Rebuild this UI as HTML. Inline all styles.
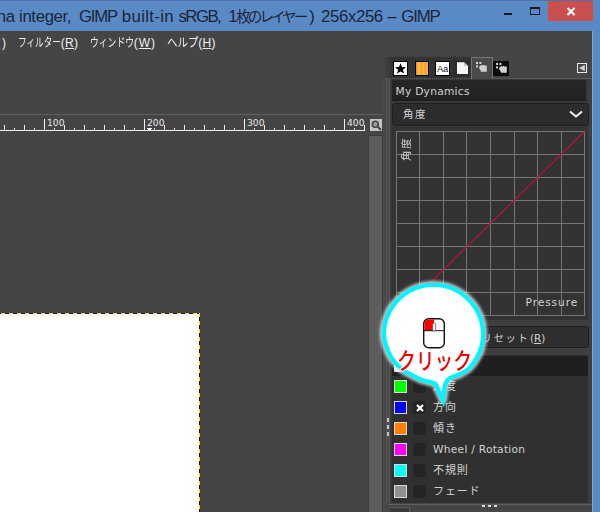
<!DOCTYPE html>
<html lang="ja">
<head>
<meta charset="utf-8">
<title>GIMP</title>
<style>
html,body{margin:0;padding:0;}
body{width:600px;height:512px;overflow:hidden;position:relative;background:#454545;font-family:"DejaVu Sans","Noto Sans CJK JP",sans-serif;color:#e0e0e0;}
.abs{position:absolute;}
#titlebar{left:0;top:0;width:600px;height:31px;background:#5a8ac6;}
#titletop{left:0;top:0;width:600px;height:1px;background:#4c72a8;}
.ttl{top:5px;height:24px;line-height:24px;font-family:"Liberation Sans","Noto Sans CJK JP",sans-serif;font-size:17px;color:#1a2538;white-space:nowrap;}
#rborder{left:593px;top:0;width:7px;height:512px;background:#5a8ac6;}
#rborder2{left:592px;top:31px;width:1px;height:481px;background:#7ba3d6;}
#closebtn{left:548px;top:1px;width:45px;height:20px;background:#c9504f;}
.menu{top:35px;height:16px;line-height:16px;font-size:12px;color:#f0f0f0;white-space:nowrap;font-family:"Liberation Sans","Noto Sans CJK JP",sans-serif;}
.rl{font-size:9.2px;line-height:10px;top:118px;color:#e8e8e8;font-family:"DejaVu Sans",sans-serif;}
#canvas{left:0;top:314px;width:199px;height:198px;background:#fff;}
.lbl{font-size:11.5px;line-height:14px;color:#d2d2d2;white-space:nowrap;}
.sw{left:394px;width:11px;height:11px;border:1px solid #d8d8d8;}
.cb{left:413px;width:13px;height:13px;border-radius:3px;background:#242424;}
</style>
</head>
<body>
<div id="titlebar" class="abs"></div>
<div id="titletop" class="abs"></div>
<div id="rborder" class="abs"></div>
<div id="rborder2" class="abs"></div>
<div class="abs ttl" style="left:-3.2px;font-size:16.8px;letter-spacing:-0.367px;">na integer,</div>
<div class="abs ttl" style="left:79.0px;font-size:16.8px;letter-spacing:-1.230px;">GIMP</div>
<div class="abs ttl" style="left:121.8px;font-size:16.8px;letter-spacing:0.352px;">built-in</div>
<div class="abs ttl" style="left:178.5px;font-size:16.8px;letter-spacing:-1.555px;">sRGB,</div>
<div class="abs ttl" style="left:228.3px;font-size:16.8px;letter-spacing:0.000px;">1</div>
<div class="abs ttl" style="left:236.3px;font-size:14.5px;letter-spacing:-2.936px;">枚のレイヤー</div>
<div class="abs ttl" style="left:309.3px;font-size:16.8px;letter-spacing:0.000px;">)</div>
<div class="abs ttl" style="left:321.0px;font-size:16.8px;letter-spacing:-0.365px;">256x256</div>
<div class="abs ttl" style="left:387.3px;font-size:16.8px;letter-spacing:0.000px;">–</div>
<div class="abs ttl" style="left:401.3px;font-size:16.8px;letter-spacing:-1.164px;">GIMP</div>
<div class="abs" style="left:504px;top:13px;width:8px;height:2px;background:#1a1a1a;"></div>
<div class="abs" style="left:530px;top:7px;width:8px;height:5px;border:1px solid #1a1a1a;border-top-width:2px;"></div>
<div id="closebtn" class="abs"></div>
<svg class="abs" style="left:565px;top:6px;" width="12" height="11" viewBox="0 0 12 11"><path d="M2.5 2 L9.5 9 M9.5 2 L2.5 9" stroke="#fff" stroke-width="2" fill="none"/></svg>
<div class="abs menu" style="left:2px;">)</div>
<div class="abs menu" style="left:17.5px;transform:scaleX(0.719);transform-origin:0 0;">フィルター</div>
<div class="abs menu" style="left:60.8px;font-family:'Liberation Sans',sans-serif;letter-spacing:0.26px;">(<u>R</u>)</div>
<div class="abs menu" style="left:89.5px;transform:scaleX(0.733);transform-origin:0 0;">ウィンドウ</div>
<div class="abs menu" style="left:133.8px;font-family:'Liberation Sans',sans-serif;letter-spacing:0.94px;">(<u>W</u>)</div>
<div class="abs menu" style="left:166.5px;transform:scaleX(0.875);transform-origin:0 0;">ヘルプ</div>
<div class="abs menu" style="left:198.3px;font-family:'Liberation Sans',sans-serif;letter-spacing:0.26px;">(<u>H</u>)</div>
<div class="abs" style="left:0;top:114px;width:386px;height:1px;background:#5e5e5e;"></div>
<div class="abs" style="left:0;top:130px;width:365px;height:1px;background:#f2f2f2;"></div>
<svg class="abs" style="left:0;top:116px;" width="370" height="16" viewBox="0 0 370 16" shape-rendering="crispEdges"><g fill="#f2f2f2"><rect x="4" y="9" width="1" height="6"/><rect x="14" y="12" width="1" height="3"/><rect x="24" y="9" width="1" height="6"/><rect x="34" y="12" width="1" height="3"/><rect x="44" y="3" width="1" height="12"/><rect x="54" y="12" width="1" height="3"/><rect x="64" y="9" width="1" height="6"/><rect x="74" y="12" width="1" height="3"/><rect x="84" y="9" width="1" height="6"/><rect x="94" y="12" width="1" height="3"/><rect x="104" y="9" width="1" height="6"/><rect x="114" y="12" width="1" height="3"/><rect x="124" y="9" width="1" height="6"/><rect x="134" y="12" width="1" height="3"/><rect x="144" y="3" width="1" height="12"/><rect x="154" y="12" width="1" height="3"/><rect x="164" y="9" width="1" height="6"/><rect x="174" y="12" width="1" height="3"/><rect x="184" y="9" width="1" height="6"/><rect x="194" y="12" width="1" height="3"/><rect x="204" y="9" width="1" height="6"/><rect x="214" y="12" width="1" height="3"/><rect x="224" y="9" width="1" height="6"/><rect x="234" y="12" width="1" height="3"/><rect x="244" y="3" width="1" height="12"/><rect x="254" y="12" width="1" height="3"/><rect x="264" y="9" width="1" height="6"/><rect x="274" y="12" width="1" height="3"/><rect x="284" y="9" width="1" height="6"/><rect x="294" y="12" width="1" height="3"/><rect x="304" y="9" width="1" height="6"/><rect x="314" y="12" width="1" height="3"/><rect x="324" y="9" width="1" height="6"/><rect x="334" y="12" width="1" height="3"/><rect x="344" y="3" width="1" height="12"/><rect x="354" y="12" width="1" height="3"/><rect x="364" y="9" width="1" height="6"/><path d="M146 11.5 L153 11.5 L149.5 15 Z"/></g></svg>
<div class="abs rl" style="left:47px;">100</div>
<div class="abs rl" style="left:147px;">200</div>
<div class="abs rl" style="left:247px;">300</div>
<div class="abs rl" style="left:347px;">400</div>
<div id="canvas" class="abs"></div>
<div class="abs" style="left:0;top:313px;width:200px;height:1px;background:repeating-linear-gradient(90deg,#111 0,#111 1px,#ffe600 1px,#ffe600 5px,#111 5px,#111 8px);"></div>
<div class="abs" style="left:199px;top:313px;width:1px;height:199px;background:repeating-linear-gradient(180deg,#ffe600 0,#ffe600 4px,#111 4px,#111 8px);"></div>
<div class="abs" style="left:370px;top:119px;width:12px;height:12px;background:#c4c4c4;"></div>
<svg class="abs" style="left:370px;top:119px;" width="12" height="12" viewBox="0 0 12 12"><circle cx="5.3" cy="5.3" r="3" fill="#9a9a9a" stroke="#444" stroke-width="1.6"/><path d="M7.6 7.6 L11 11" stroke="#444" stroke-width="2"/></svg>
<div class="abs" style="left:368px;top:135px;width:13px;height:377px;background:#5d5d5d;border:1px solid #3a3a3a;border-bottom:none;"></div>
<div class="abs" style="left:383px;top:79px;width:9px;height:433px;background:#494949;"></div>
<div class="abs" style="left:386px;top:79px;width:1px;height:433px;background:#575757;"></div>
<div class="abs" style="left:389px;top:79px;width:1px;height:433px;background:#5c5c5c;"></div>
<div class="abs" style="left:390px;top:79px;width:2px;height:433px;background:#393939;"></div>
<div class="abs" style="left:385px;top:56px;width:86px;height:23px;background:linear-gradient(90deg,#404040,#333 8px);border-top:1px dotted #4e4e4e;border-bottom:1px dotted #626262;box-sizing:border-box;"></div>
<div class="abs" style="left:492px;top:78px;width:100px;height:1px;background:#5a5a5a;"></div>
<div class="abs" style="left:393px;top:61px;width:13px;height:13px;background:#fff;border:1px solid #000;"></div>
<svg class="abs" style="left:394px;top:62px;" width="13" height="13" viewBox="0 0 13 13"><path d="M6.5 1.2 L8 5 L12 5.2 L8.9 7.7 L10 11.6 L6.5 9.4 L3 11.6 L4.1 7.7 L1 5.2 L5 5 Z" fill="#000"/></svg>
<div class="abs" style="left:415px;top:61px;width:12px;height:13px;border:1px solid #000;background:linear-gradient(90deg,#f08a1c 0%,#ffc24a 25%,#f59a28 45%,#ffc24a 60%,#f59a28 75%,#ffb640 100%);"></div>
<div class="abs" style="left:435px;top:61px;width:13px;height:13px;background:#fff;border:1px solid #000;font-family:'Liberation Sans',sans-serif;font-size:9.5px;line-height:14px;color:#222;text-align:center;letter-spacing:-0.4px;">Aa</div>
<div class="abs" style="left:453px;top:60px;width:17px;height:16px;background:#2c2c2c;"></div>
<svg class="abs" style="left:456px;top:61px;" width="13" height="14" viewBox="0 0 13 14"><path d="M1 1.2 L8 1.2 L12 5 L12 13 L1 13 Z" fill="#f4f4f4"/><path d="M8 1.2 L8 5 L12 5 Z" fill="#c8c8c8"/></svg>
<div class="abs" style="left:471px;top:57px;width:20px;height:22px;background:#4a4a4a;border:1px solid #747474;border-bottom:none;box-sizing:content-box;"></div>
<svg class="abs" style="left:476px;top:62px;" width="12" height="11" viewBox="0 0 12 11"><g fill="#d0d0d0"><rect x="0" y="0" width="2" height="2"/><rect x="3.4" y="0" width="2" height="2"/><rect x="0" y="3.4" width="2" height="2"/><path d="M3.4 4.4 L5 3 L6.5 3.4 L7.5 2.8 L8.6 3.6 L10.8 3.4 L10.8 9.8 L5 9.8 L4.4 8 L3.2 6.4 Z"/></g></svg>
<div class="abs" style="left:493px;top:61px;width:16px;height:15px;background:#0c0c0c;"></div>
<svg class="abs" style="left:496px;top:62.5px;" width="12" height="11" viewBox="0 0 12 11"><g fill="#d0d0d0"><rect x="0" y="0" width="2" height="2"/><rect x="3.4" y="0" width="2" height="2"/><rect x="0" y="3.4" width="2" height="2"/><path d="M3.4 4.4 L5 3 L6.5 3.4 L7.5 2.8 L8.6 3.6 L10.8 3.4 L10.8 9.8 L5 9.8 L4.4 8 L3.2 6.4 Z"/></g></svg>
<div class="abs" style="left:577px;top:63px;width:8px;height:8px;border:1px solid #e8e8e8;"></div>
<svg class="abs" style="left:578px;top:64px;" width="8" height="8" viewBox="0 0 8 8"><path d="M6.8 0.8 L6.8 7.2 L1 4 Z" fill="#d0d0d0"/></svg>
<div class="abs" style="left:392px;top:79px;width:200px;height:424px;background:#3e3e3e;"></div>
<div class="abs" style="left:392px;top:79px;width:196px;height:50px;background:#383838;"></div>
<div class="abs" style="left:392px;top:79.5px;width:194px;height:21px;background:linear-gradient(#272727,#212121);border-bottom:1px solid #1a1a1a;box-sizing:border-box;"></div>
<div class="abs lbl" style="left:395.5px;top:84.5px;font-size:10.67px;letter-spacing:0.25px;">My Dynamics</div>
<div class="abs" style="left:392px;top:103px;width:197px;height:23px;background:#2c2c2c;border:1px solid #202020;border-radius:3px;box-sizing:border-box;"></div>
<div class="abs lbl" style="left:403px;top:107px;letter-spacing:1.5px;font-size:10.5px;">角度</div>
<svg class="abs" style="left:568px;top:109px;" width="16" height="10" viewBox="0 0 16 10"><path d="M2 2.5 L8 7.5 L14 2.5" stroke="#f4f4f4" stroke-width="2" fill="none"/></svg>
<svg class="abs" style="left:392px;top:127px;" width="200" height="195" viewBox="392 127 200 195"><rect x="392" y="127" width="196" height="193" fill="#333"/><rect x="396" y="131" width="189" height="185" fill="#333"/><g fill="#767676" shape-rendering="crispEdges"><rect x="396" y="131" width="1" height="185"/><rect x="419" y="131" width="1" height="185"/><rect x="443" y="131" width="1" height="185"/><rect x="466" y="131" width="1" height="185"/><rect x="490" y="131" width="1" height="185"/><rect x="514" y="131" width="1" height="185"/><rect x="537" y="131" width="1" height="185"/><rect x="561" y="131" width="1" height="185"/><rect x="584" y="131" width="1" height="185"/><rect x="396" y="131" width="189" height="1"/><rect x="396" y="154" width="189" height="1"/><rect x="396" y="177" width="189" height="1"/><rect x="396" y="200" width="189" height="1"/><rect x="396" y="223" width="189" height="1"/><rect x="396" y="246" width="189" height="1"/><rect x="396" y="269" width="189" height="1"/><rect x="396" y="292" width="189" height="1"/><rect x="396" y="315" width="189" height="1"/></g><line x1="396.5" y1="315.5" x2="584.5" y2="131.5" stroke="#be1238" stroke-width="1.15"/></svg>
<div class="abs lbl" style="left:525.5px;top:295.5px;font-size:10.67px;letter-spacing:0.9px;">Pressure</div>
<div class="abs lbl" style="left:399px;top:161px;font-size:10.5px;transform:rotate(-90deg);transform-origin:0 0;letter-spacing:1.8px;opacity:0.999;">角度</div>
<div class="abs" style="left:438px;top:326px;width:151px;height:22px;background:#2e2e2e;border:1px solid #1e1e1e;border-radius:3px;box-sizing:border-box;"></div>
<div class="abs lbl" style="left:481.5px;top:331px;letter-spacing:1.6px;font-size:10.4px;">リセット<span style="letter-spacing:0;margin-left:0.5px">(<u>R</u>)</span></div>
<div class="abs" style="left:392px;top:355px;width:196px;height:148px;background:#303030;"></div>
<div class="abs" style="left:392px;top:355.5px;width:196px;height:20px;background:#1f1f1f;"></div>
<div class="abs sw" style="top:358.9px;background:#ffd8d8;"></div>
<div class="abs cb" style="top:358.9px;"></div>
<div class="abs lbl" style="left:433px;top:358.5px;font-size:11px;letter-spacing:0.9px;">筆圧</div>
<div class="abs sw" style="top:379.9px;background:#00ff00;"></div>
<div class="abs cb" style="top:379.9px;"></div>
<div class="abs lbl" style="left:433px;top:379.5px;font-size:11px;letter-spacing:0.9px;">速度</div>
<div class="abs sw" style="top:400.9px;background:#0000ff;"></div>
<div class="abs cb" style="top:400.9px;"></div>
<div class="abs lbl" style="left:433px;top:400.5px;font-size:11px;letter-spacing:0.9px;">方向</div>
<div class="abs sw" style="top:421.9px;background:#ff8000;"></div>
<div class="abs cb" style="top:421.9px;"></div>
<div class="abs lbl" style="left:433px;top:421.5px;font-size:11px;letter-spacing:0.9px;">傾き</div>
<div class="abs sw" style="top:442.9px;background:#ff00ff;"></div>
<div class="abs cb" style="top:442.9px;"></div>
<div class="abs lbl" style="left:433px;top:442.5px;font-size:10.67px;letter-spacing:0.25px;">Wheel / Rotation</div>
<div class="abs sw" style="top:463.9px;background:#00ffff;"></div>
<div class="abs cb" style="top:463.9px;"></div>
<div class="abs lbl" style="left:433px;top:463.5px;font-size:11px;letter-spacing:0.9px;">不規則</div>
<div class="abs sw" style="top:484.9px;background:#909090;"></div>
<div class="abs cb" style="top:484.9px;"></div>
<div class="abs lbl" style="left:433px;top:484.5px;font-size:11px;letter-spacing:0.9px;">フェード</div>
<svg class="abs" style="left:415px;top:402.6px;" width="10" height="10" viewBox="0 0 10 10"><path d="M2 2 L8 8 M8 2 L2 8" stroke="#fff" stroke-width="2.2" fill="none"/></svg>
<div class="abs" style="left:386px;top:503px;width:206px;height:9px;background:#464646;"></div>
<div class="abs" style="left:388px;top:504px;width:204px;height:1px;background:#606060;"></div>
<div class="abs" style="left:390px;top:507px;width:20px;height:5px;background:#3b3b3b;border-top:1px solid #5c5c5c;border-right:1px solid #606060;box-sizing:border-box;"></div>
<div class="abs" style="left:482px;top:505px;width:3px;height:2px;background:#ddd;box-shadow:6px 0 0 #ddd,12px 0 0 #ddd;"></div>
<div class="abs" style="left:386.5px;top:418px;width:2.5px;height:3.5px;background:#c4c4c4;box-shadow:0 7px 0 #c4c4c4,0 14px 0 #c4c4c4;"></div>
<svg class="abs" style="left:370px;top:270px;" width="130" height="145" viewBox="370 270 130 145"><defs><filter id="glow" x="-20%" y="-20%" width="140%" height="140%"><feGaussianBlur stdDeviation="1.6"/></filter></defs><path d="M383.90 334.50 A49.60 49.60 0 0 1 483.10 334.50 C483.10 338.40 482.60 342.38 481.60 346.20 C480.60 350.02 479.25 353.65 477.10 357.40 C474.95 361.15 471.60 365.92 468.70 368.70 C465.80 371.48 462.90 372.50 459.70 374.10 C456.50 375.70 451.90 376.65 449.50 378.30 C447.10 379.95 446.22 381.50 445.30 384.00 C444.38 386.50 444.38 390.60 444.00 393.30 C443.62 396.00 443.33 397.90 443.00 400.20 C441.57 397.23 440.10 394.10 438.70 391.30 C437.30 388.50 437.50 385.32 434.60 383.40 C431.70 381.48 425.35 381.35 421.30 379.80 C417.25 378.25 413.72 375.96 410.30 374.10 C406.88 372.24 403.97 371.43 400.80 368.65 C397.63 365.87 393.73 361.14 391.30 357.40 C388.87 353.66 387.43 350.02 386.20 346.20 C384.97 342.38 383.90 338.40 383.90 334.50 Z" fill="#fff" stroke="#fff" stroke-width="8" filter="url(#glow)" stroke-linejoin="round" opacity="0.75"/><path d="M383.90 334.50 A49.60 49.60 0 0 1 483.10 334.50 C483.10 338.40 482.60 342.38 481.60 346.20 C480.60 350.02 479.25 353.65 477.10 357.40 C474.95 361.15 471.60 365.92 468.70 368.70 C465.80 371.48 462.90 372.50 459.70 374.10 C456.50 375.70 451.90 376.65 449.50 378.30 C447.10 379.95 446.22 381.50 445.30 384.00 C444.38 386.50 444.38 390.60 444.00 393.30 C443.62 396.00 443.33 397.90 443.00 400.20 C441.57 397.23 440.10 394.10 438.70 391.30 C437.30 388.50 437.50 385.32 434.60 383.40 C431.70 381.48 425.35 381.35 421.30 379.80 C417.25 378.25 413.72 375.96 410.30 374.10 C406.88 372.24 403.97 371.43 400.80 368.65 C397.63 365.87 393.73 361.14 391.30 357.40 C388.87 353.66 387.43 350.02 386.20 346.20 C384.97 342.38 383.90 338.40 383.90 334.50 Z" fill="#fff" stroke="#04f4ff" stroke-width="4.3" stroke-linejoin="miter" stroke-miterlimit="10"/><rect x="423.7" y="318.7" width="20.6" height="29" rx="5" ry="5" fill="#fff" stroke="#111" stroke-width="1.4"/><path d="M424.4 330.5 L424.4 324 A4.6 4.6 0 0 1 429 319.4 L434 319.4 L434 330.5 Z" fill="#f00"/><line x1="423.7" y1="330.7" x2="444.3" y2="330.7" stroke="#111" stroke-width="1"/><rect x="432.7" y="323" width="2.9" height="8" rx="1.4" fill="#fff" stroke="#555" stroke-width="0.8"/><text x="434.6" y="369.2" opacity="0.999" text-anchor="middle" font-family="'Liberation Sans','Noto Sans CJK JP',sans-serif" font-weight="500" font-size="23" fill="#f40000" stroke="#fff" stroke-width="2" paint-order="stroke" textLength="75" lengthAdjust="spacingAndGlyphs">クリック</text></svg>
</body>
</html>
